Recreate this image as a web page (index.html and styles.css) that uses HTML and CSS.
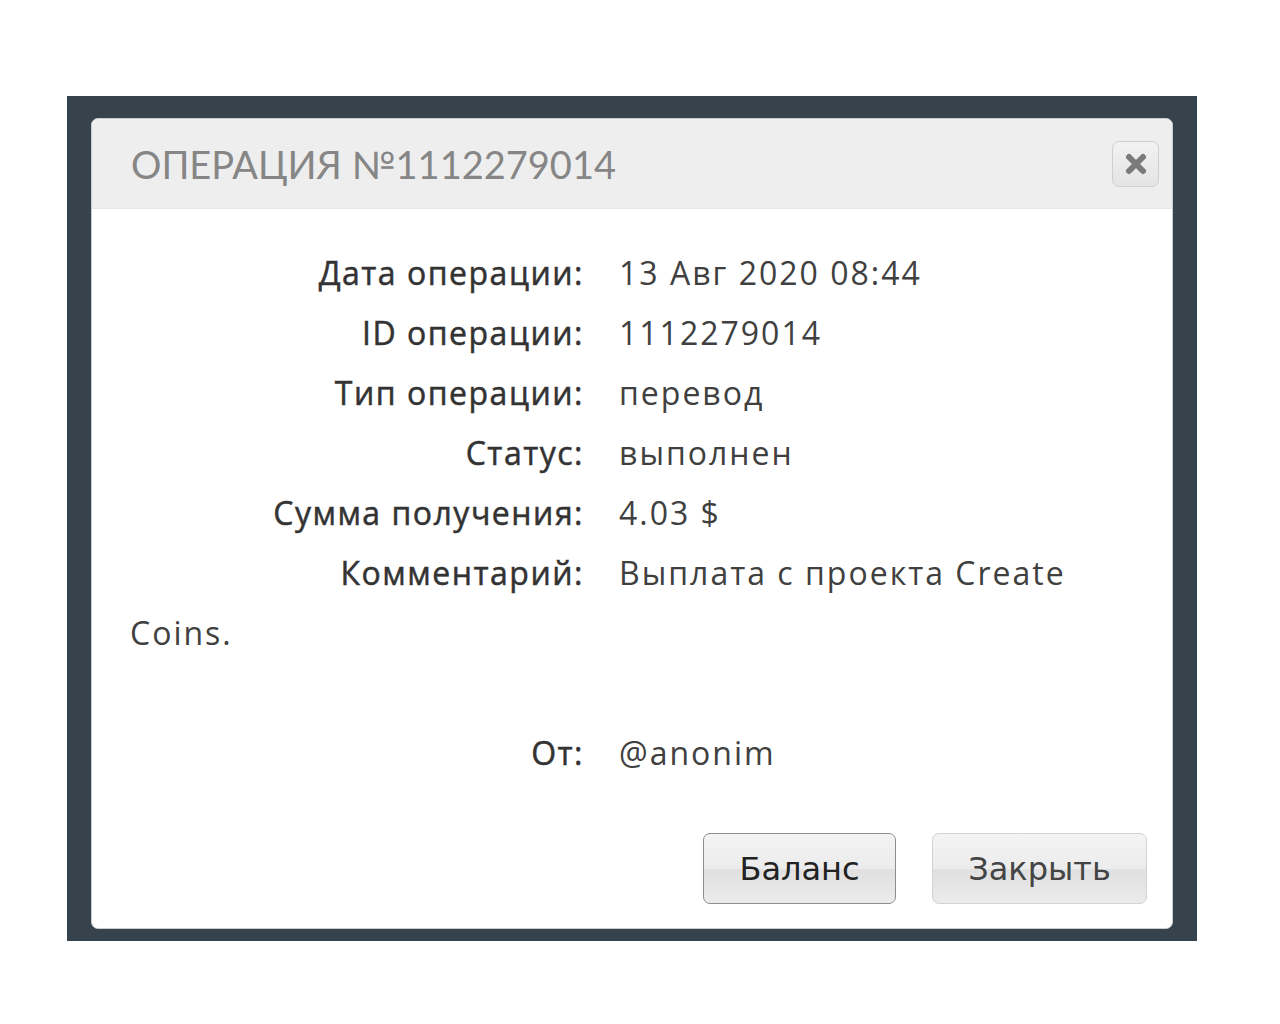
FILE: index.html
```html
<!DOCTYPE html>
<html lang="ru">
<head>
    <meta charset="UTF-8">
    <title>Операция №1112279014</title>
    <link rel="stylesheet" href="styles.css">
</head>
<body>
    <div class="backdrop">
        <div class="modal">
            <div class="modal-header">
                <h3 class="modal-title">Операция №1112279014</h3>
                <button class="close-btn" title="Закрыть">
                    <svg width="24" height="24" viewBox="0 0 24 24">
                        <path d="M5 5 L19 19 M19 5 L5 19" stroke="#7a7a7a" stroke-width="6" stroke-linecap="round"/>
                    </svg>
                </button>
            </div>

            <div class="modal-body">
                <div class="row"><span class="label">Дата операции:</span>13 Авг 2020 08:44</div>
                <div class="row"><span class="label">ID операции:</span>1112279014</div>
                <div class="row"><span class="label">Тип операции:</span>перевод</div>
                <div class="row"><span class="label">Статус:</span>выполнен</div>
                <div class="row"><span class="label">Сумма получения:</span>4.03 $</div>
                <div class="row"><span class="label">Комментарий:</span>Выплата с проекта Create Coins.<br><br></div>
                <div class="row"><span class="label">От:</span>@anonim</div>
            </div>

            <div class="modal-footer">
                <button class="btn btn-active">Баланс</button>
                <button class="btn">Закрыть</button>
            </div>
        </div>
    </div>
</body>
</html>
```

FILE: styles.css
```css
* {
    margin: 0;
    padding: 0;
    box-sizing: border-box;
}

body {
    background: #fff;
    font-family: 'Open Sans', sans-serif;
    padding-top: 96px;
}

.backdrop {
    margin-left: 67px;
    width: 1130px;
    height: 845px;
    background: #36434c;
    padding: 22px 24px 0 24px;
}

.modal {
    width: 1082px;
    height: 811px;
    background: #fff;
    border: 1px solid #c9cdd0;
    border-radius: 7px;
    overflow: hidden;
    display: flex;
    flex-direction: column;
}

.modal-header {
    height: 90px;
    background: #eeeeee;
    border-bottom: 1px solid #e8e8e8;
    display: flex;
    align-items: center;
    justify-content: space-between;
    padding: 0 13px 0 39px;
}

.modal-title {
    font-family: 'Lato', sans-serif;
    font-weight: 400;
    font-size: 38px;
    text-transform: uppercase;
    color: #868686;
}

.close-btn {
    width: 47px;
    height: 46px;
    border: 1px solid #cfcfcf;
    border-radius: 7px;
    background: linear-gradient(#f2f2f2, #e4e4e4);
    display: flex;
    align-items: center;
    justify-content: center;
    cursor: pointer;
}

.modal-body {
    flex: 1;
    padding: 34px 40px 0 38px;
    font-size: 32px;
    line-height: 60px;
    letter-spacing: 2px;
    color: #404040;
}

.label {
    display: inline-block;
    width: 489px;
    padding-right: 35px;
    text-align: right;
    letter-spacing: 1.5px;
    color: #333;
    -webkit-text-stroke: 0.5px #333;
}

.modal-footer {
    display: flex;
    justify-content: flex-end;
    gap: 36px;
    padding: 0 25px 24px 0;
}

.btn {
    height: 71px;
    padding: 0 34px;
    font-family: 'DejaVu Sans', sans-serif;
    font-size: 32px;
    color: #333;
    border: 1px solid #d2d2d2;
    border-radius: 7px;
    background: linear-gradient(#f4f4f4 0%, #ececec 50%, #e0e0e0 52%, #ebebeb 100%);
    cursor: pointer;
}

.btn:first-child {
    width: 193px;
}

.btn:last-child {
    width: 215px;
    color: #444;
}

.btn-active {
    border-color: #8e8e8e;
    color: #222;
}
```
